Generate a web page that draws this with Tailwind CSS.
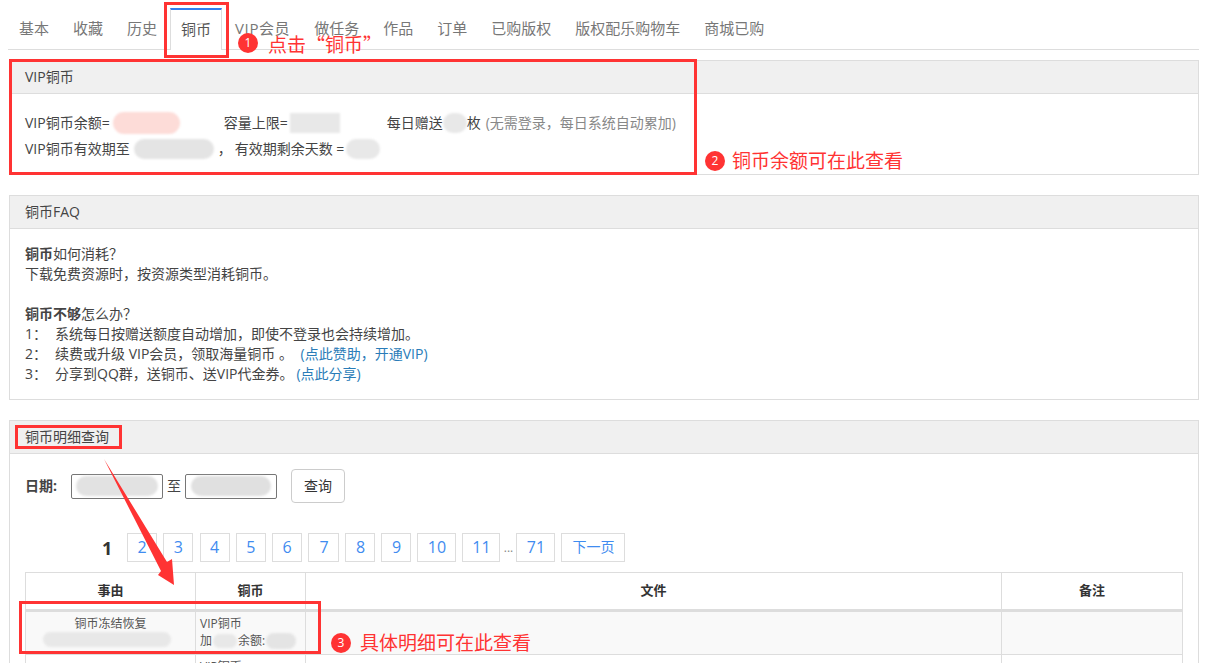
<!DOCTYPE html>
<html lang="zh">
<head>
    <meta charset="UTF-8">
    <title>铜币</title>
    <script src="https://cdn.jsdelivr.net/npm/@tailwindcss/browser@4"></script>
</head>
<body class="bg-white h-[663px] overflow-hidden relative font-['Open_Sans','Noto_Sans_CJK_SC',sans-serif] text-[14px] leading-[20px] text-[#444]">
    <div class="pl-[8px] pr-[9px] pt-[8px]">
        <!-- tabs -->
        <ul class="flex h-[42px] border-b border-[#ddd] text-[15px] text-[#777]">
            <li class="mr-[2px] px-[11px] pt-[10px]">基本</li>
            <li class="mr-[2px] px-[11px] pt-[10px]">收藏</li>
            <li class="mr-[2px] px-[11px] pt-[10px]">历史</li>
            <li class="mr-[2px] px-[10px] pt-[9px] h-[42px] bg-white border-x border-[#ddd] border-t-2 border-t-[#337ff0] text-[#555]">铜币</li>
            <li class="mr-[2px] px-[11px] pt-[10px] tracking-[0.6px]">VIP会员</li>
            <li class="mr-[2px] px-[11px] pt-[10px]">做任务</li>
            <li class="mr-[2px] px-[11px] pt-[10px]">作品</li>
            <li class="mr-[2px] px-[11px] pt-[10px]">订单</li>
            <li class="mr-[2px] px-[11px] pt-[10px]">已购版权</li>
            <li class="mr-[2px] px-[11px] pt-[10px]">版权配乐购物车</li>
            <li class="mr-[2px] px-[11px] pt-[10px]">商城已购</li>
        </ul>

        <!-- VIP panel -->
        <section class="ml-[1px] mt-[10px] h-[115px] border border-[#ddd]">
            <h3 class="h-[33px] pl-[15px] leading-[31px] bg-[#f0f0f0] border-b border-[#ddd]">VIP铜币</h3>
            <div class="pl-[15px] pt-[16px]">
                <div class="flex h-[26px] items-center">
                    <span>VIP铜币余额=</span>
                    <span class="w-[67px] h-[22px] ml-[3px] rounded-full bg-[#fddcd8] blur-[1px]"></span>
                    <span class="ml-[44px]">容量上限=</span>
                    <span class="w-[50px] h-[20px] ml-[2px] bg-[#e8e8e8] blur-[1px]"></span>
                    <span class="ml-[47px]">每日赠送</span>
                    <span class="w-[24px] h-[20px] rounded-full bg-[#e8e8e8] blur-[1px]"></span>
                    <span>枚</span>
                    <span class="ml-[5px] text-[#888]">(无需登录，每日系统自动累加)</span>
                </div>
                <div class="flex h-[26px] items-center">
                    <span>VIP铜币有效期至</span>
                    <span class="w-[80px] h-[20px] ml-[4px] rounded-full bg-[#e4e4e4] blur-[1px]"></span>
                    <span class="ml-[4px]">，</span>
                    <span class="ml-[3px]">有效期剩余天数 =</span>
                    <span class="w-[34px] h-[20px] ml-[2px] rounded-full bg-[#e8e8e8] blur-[1px]"></span>
                </div>
            </div>
        </section>

        <!-- FAQ panel -->
        <section class="ml-[1px] mt-[20px] h-[205px] border border-[#ddd]">
            <h3 class="h-[33px] pl-[15px] leading-[31px] bg-[#f0f0f0] border-b border-[#ddd]">铜币FAQ</h3>
            <div class="pl-[15px] pt-[15px]">
                <p><b>铜币</b>如何消耗？</p>
                <p>下载免费资源时，按资源类型消耗铜币。</p>
                <p class="mt-[20px]"><b>铜币不够</b>怎么办？</p>
                <p><span class="inline-block w-[30px]">1：</span>系统每日按赠送额度自动增加，即使不登录也会持续增加。</p>
                <p><span class="inline-block w-[30px]">2：</span>续费或升级 VIP会员，领取海量铜币 。 <a class="ml-[4px] text-[#2a7cb8]">(点此赞助，开通VIP)</a></p>
                <p><span class="inline-block w-[30px]">3：</span>分享到QQ群，送铜币、送VIP代金券。<a class="ml-[3px] text-[#2a7cb8]">(点此分享)</a></p>
            </div>
        </section>

        <!-- detail panel -->
        <section class="ml-[1px] mt-[20px] h-[300px] border border-[#ddd]">
            <h3 class="h-[33px] pl-[15px] leading-[31px] bg-[#f0f0f0] border-b border-[#ddd]">铜币明细查询</h3>
            <div class="pl-[15px] pr-[15px]">
                <form class="flex items-center h-[34px] mt-[15px]">
                    <b class="w-[46px]">日期:</b>
                    <span class="flex items-center justify-center w-[92px] h-[25px] border border-[#767676] rounded-[2px]"><i class="block w-[82px] h-[20px] rounded-full bg-[#e2e2e2] blur-[1px]"></i></span>
                    <span class="w-[22px] text-center">至</span>
                    <span class="flex items-center justify-center w-[92px] h-[25px] border border-[#767676] rounded-[2px]"><i class="block w-[80px] h-[20px] rounded-full bg-[#e0e0e0] blur-[1px]"></i></span>
                    <button class="ml-[14px] w-[54px] h-[34px] border border-[#ccc] rounded-[4px] text-[#333]">查询</button>
                </form>

                <div class="flex items-center mt-[30px] h-[29px] pl-[77px] text-[16px] leading-[26px] text-[#3f8cf0]">
                    <b class="w-[25px] text-[18px] text-[#333]">1</b>
                    <a class="w-[30px] h-[29px] mr-[6.3px] flex items-start justify-center border border-[#ddd]">2</a>
                    <a class="w-[30px] h-[29px] mr-[6.3px] flex items-start justify-center border border-[#ddd]">3</a>
                    <a class="w-[30px] h-[29px] mr-[6.3px] flex items-start justify-center border border-[#ddd]">4</a>
                    <a class="w-[30px] h-[29px] mr-[6.3px] flex items-start justify-center border border-[#ddd]">5</a>
                    <a class="w-[30px] h-[29px] mr-[6.3px] flex items-start justify-center border border-[#ddd]">6</a>
                    <a class="w-[31px] h-[29px] mr-[6px] flex items-start justify-center border border-[#ddd]">7</a>
                    <a class="w-[30px] h-[29px] mr-[6px] flex items-start justify-center border border-[#ddd]">8</a>
                    <a class="w-[30px] h-[29px] mr-[6px] flex items-start justify-center border border-[#ddd]">9</a>
                    <a class="w-[39px] h-[29px] mr-[6px] flex items-start justify-center border border-[#ddd]">10</a>
                    <a class="w-[38px] h-[29px] flex items-start justify-center border border-[#ddd]">11</a>
                    <span class="w-[16px] text-center text-[12px] text-[#888]">...</span>
                    <a class="w-[39px] h-[29px] mr-[6px] flex items-start justify-center border border-[#ddd]">71</a>
                    <a class="w-[64px] h-[29px] flex items-start justify-center border border-[#ddd] text-[14px]">下一页</a>
                </div>

                <table class="mt-[10px] w-[1158px] table-fixed border-collapse text-[12px] leading-[17px] text-[#555]">
                    <thead class="text-[13px] text-[#333]">
                        <tr class="h-[38px]">
                            <th class="w-[170px] pb-[2px] border border-[#ddd] border-b-[3px]">事由</th>
                            <th class="w-[110px] pb-[2px] border border-[#ddd] border-b-[3px]">铜币</th>
                            <th class="pb-[2px] border border-[#ddd] border-b-[3px]">文件</th>
                            <th class="w-[181px] pb-[2px] border border-[#ddd] border-b-[3px]">备注</th>
                        </tr>
                    </thead>
                    <tbody>
                        <tr class="h-[44px] bg-[#f9f9f9]">
                            <td class="border border-[#ddd] text-center align-top pt-[3px]">
                                <div>铜币冻结恢复</div>
                                <div class="ml-[17px] w-[128px] h-[15px] rounded-full bg-[#e8e8e8] blur-[1px]"></div>
                            </td>
                            <td class="border border-[#ddd] pl-[4px] align-top pt-[3px]">
                                <div>VIP铜币</div>
                                <div class="flex items-center">加<i class="block mx-[1px] w-[24px] h-[14px] rounded-full bg-[#e8e8e8] blur-[1px]"></i>余额:<i class="block ml-[1px] w-[30px] h-[16px] rounded-full bg-[#e4e4e4] blur-[1px]"></i></div>
                            </td>
                            <td class="border border-[#ddd]"></td>
                            <td class="border border-[#ddd]"></td>
                        </tr>
                        <tr class="h-[44px]">
                            <td class="border border-[#ddd]"></td>
                            <td class="border border-[#ddd] pl-[4px] align-top pt-[3px]">VIP铜币</td>
                            <td class="border border-[#ddd]"></td>
                            <td class="border border-[#ddd]"></td>
                        </tr>
                    </tbody>
                </table>
            </div>
        </section>
    </div>

    <!-- annotations -->
    <div class="absolute left-[164px] top-[2px] w-[65px] h-[56px] border-[3px] border-[#f33]"></div>
    <div class="absolute left-[9px] top-[59px] w-[688px] h-[116px] border-[3px] border-[#f33]"></div>
    <div class="absolute left-[15px] top-[425px] w-[107px] h-[24px] border-[3px] border-[#f33]"></div>
    <div class="absolute left-[19px] top-[601px] w-[302px] h-[53px] border-[3px] border-[#f33]"></div>

    <div class="absolute left-[238px] top-[33px] w-[20px] h-[20px] rounded-full bg-[#f33] text-white text-[12px] leading-[20px] text-center">1</div>
    <div class="absolute left-[268px] top-[30px] font-['Noto_Sans_CJK_SC',sans-serif] text-[19px] leading-[28px] text-[#f33]">点击“铜币”</div>
    <div class="absolute left-[705px] top-[151px] w-[20px] h-[20px] rounded-full bg-[#f33] text-white text-[12px] leading-[20px] text-center">2</div>
    <div class="absolute left-[732px] top-[147px] text-[19px] leading-[28px] text-[#f33]">铜币余额可在此查看</div>
    <div class="absolute left-[331px] top-[633px] w-[20px] h-[20px] rounded-full bg-[#f33] text-white text-[12px] leading-[20px] text-center">3</div>
    <div class="absolute left-[360px] top-[629px] text-[19px] leading-[28px] text-[#f33]">具体明细可在此查看</div>

    <svg class="absolute left-0 top-0 pointer-events-none" width="1208" height="663">
        <polygon points="104,459 167,562 172,559 174,585 158,575 161,571" fill="#f33"/>
    </svg>
</body>
</html>
